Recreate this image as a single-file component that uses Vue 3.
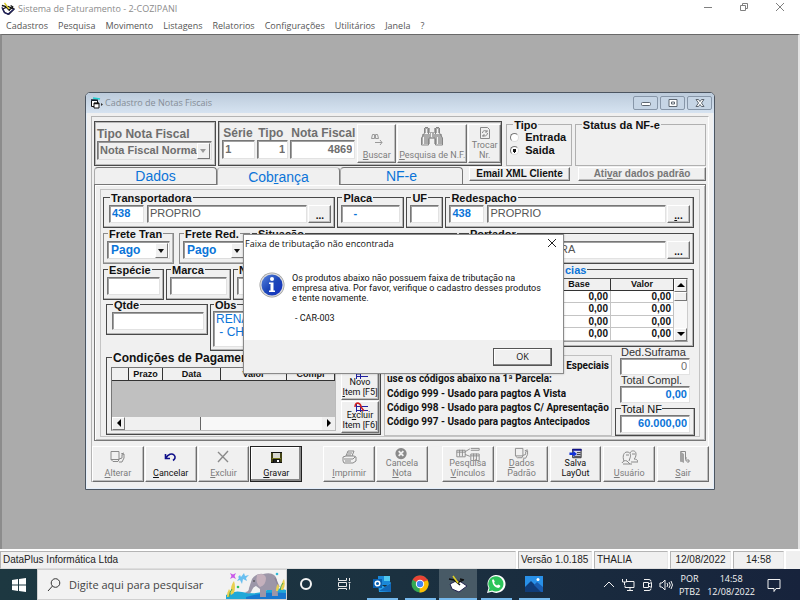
<script setup>
import { ref } from 'vue'

const menus = ['Cadastros', 'Pesquisa', 'Movimento', 'Listagens', 'Relatorios', 'Configurações', 'Utilitários', 'Janela', '?']
const tipo = ref('saida')
const serie = ref('1')
const tipoNum = ref('1')
const nota = ref('4869')
const obs = ref('RENA\n - CHA')

const G = '#8a8a8a'
const icons = {
  alterar: [
    { d: 'M2 1.500h8v8h-8zM2 9.500l2 2h5l1-2M10 9l3-1v-3l2-1v4l-2 4h-3M12 4l3-1', s: G },
  ],
  cancelar: [
    { d: 'M3.500 4v4.500h4.500M4 8c2-4 6-5 8-3c2 2 1 4-1 5.500', s: '#10108a', w: 1.6 },
  ],
  x: [{ d: 'M3 2l10 10M13 1l-10 11', s: G, w: 1.4 }],
  gravar: [
    { d: 'M3 2h11v11h-11z', f: '#111' },
    { d: 'M5 3h7v5h-7z', f: '#d8d8d0' },
    { d: 'M4 3v9M13 3v9M4 8.500h9', s: '#77771c', w: 1 },
    { d: 'M6 10h6v3h-6z', f: '#222' },
    { d: 'M9 10h2v2h-2z', f: '#fff' },
  ],
  imprimir: [
    { d: 'M5 6l2-5h6l-2 5M2 7l3-1h8l2 1v4l-3 2h-9l-1-2zM3 9h9l2-2M4 11h6M7 3h4M6 5h4', s: G },
  ],
  cancelaNota: [
    { d: 'M8 1a6 6 0 1 0 .01 0z', f: G },
    { d: 'M5.500 4.500l5 5M10.500 4.500l-5 5', s: '#f0f0f0', w: 2 },
  ],
  salva: [
    { d: 'M5.500 2.500h9v9h-9z', s: '#222', f: '#dde' },
    { d: 'M5 2h10v2h-10z', f: '#10108a' },
    { d: 'M10 6h4M10 8h4M7 10h7', s: '#333' },
    { d: 'M2 6h4v-2l4 3.500l-4 3v-2h-4z', f: '#1030d8' },
  ],
  vinculos: [
    { d: 'M1 3.500h9v7h-9zM1 5.500h9M4 3v7M7 3v7M10 5l5-3M10 8l5 2M16 1.500h9v2h-9M16 7.500h9v7h-9zM16 9.500h9M19 7v7M22 7v7', s: G },
  ],
  usuario: [
    { d: 'M3 11c-2-5 0-9 3-9c4 0 4 4 3 6l-1 3M5 5h3M1 13c1-2 3-3 5-2l3 3M9 3c1-3 6-3 6 1c0 3-1 4-2 5c2 0 4 1 4 3h-7M11 4h3M2 14h9', s: G },
  ],
  sair: [
    { d: 'M5.500 1.500h5v8M5 11h3', s: G },
    { d: 'M5 1l4 3v9l-4-2z', f: '#a2a2a2' },
    { d: 'M11 7v4h3M12.500 9l2 2l-2 2', s: G },
  ],
}
const tools = [
  { lines: ['Alterar'], key: 'A', icon: 'alterar', off: true },
  { lines: ['Cancelar'], key: 'C', icon: 'cancelar' },
  { lines: ['Excluir'], key: 'E', icon: 'x', off: true },
  { lines: ['Gravar'], key: 'G', icon: 'gravar', focus: true },
  { lines: ['Imprimir'], key: 'I', icon: 'imprimir', off: true, gap: 'gap-wide' },
  { lines: ['Cancela', 'Nota'], key: 'N', icon: 'cancelaNota', off: true },
  { lines: ['Pesquisa', 'Vínculos'], key: 'V', icon: 'vinculos', off: true, gap: 'gap-mid' },
  { lines: ['Dados', 'Padrão'], key: 'D', icon: 'alterar', off: true, gap: 'gap-small' },
  { lines: ['Salva', 'LayOut'], key: '', icon: 'salva', gap: 'gap-small' },
  { lines: ['Usuário'], key: 'U', icon: 'usuario', off: true, gap: 'gap-small' },
  { lines: ['Sair'], key: 'S', icon: 'sair', off: true, gap: 'gap-small' },
]
const split = (line, key) => {
  const i = key ? line.indexOf(key) : -1
  return i < 0 ? [line, '', ''] : [line.slice(0, i), key, line.slice(i + 1)]
}
</script>

<template>
  <div class="screen">
    <header class="apptitle">
      <svg class="logo" viewBox="0 0 16 16" width="14" height="14"><path d="M2 8l6-3l7 3l-6 6l-5-2z" fill="#fff" stroke="#111" stroke-width="1.500" /><path d="M1 6l3 6l4 2l7-6" fill="none" stroke="#222260" stroke-width="1.500" /><path d="M1 4l4 1l5 5M9 9l5-3M11 4l3 2" stroke="#111" stroke-width="1.500" fill="none" /><path d="M4 1l5 7" stroke="#d8c820" stroke-width="1.500" /></svg>
      <h1>Sistema de Faturamento - 2-COZIPANI</h1>
      <div class="sysbtns">
        <button aria-label="Minimizar"><svg width="10" height="10"><path d="M1 5.500h8" /></svg></button>
        <button aria-label="Restaurar"><svg width="10" height="10"><path d="M1.500 3.500h5v5h-5zM3.500 3v-1.500h5v5h-2" /></svg></button>
        <button aria-label="Fechar"><svg width="10" height="10"><path d="M1 1l8 8M9 1l-8 8" /></svg></button>
      </div>
    </header>
    <nav class="menubar"><a v-for="m in menus" :key="m" href="#">{{ m }}</a></nav>

    <main class="mdi">
      <section class="win">
        <div class="wintitle">
          <svg width="14" height="12" viewBox="0 0 14 12"><path d="M1.500 3.500h6v6h-6z" fill="#fff" stroke="#111" /><path d="M1 3h7" stroke="#123" stroke-width="1.500" /><path d="M4 6h5v5h-5z" fill="#fff" stroke="#111" /><path d="M4 6.500h5" stroke="#111" stroke-width="1.500" /><path d="M3 1l7 1" stroke="#20d0d0" stroke-width="1.500" /><path d="M11 6l2 1.500l-2 1.500z" fill="#333" /></svg>
          <h2>Cadastro de Notas Fiscais</h2>
          <div class="winbtns">
            <button aria-label="Minimizar janela"><svg width="12" height="10"><rect x="1.500" y="4.500" width="9" height="3" rx="1" /></svg></button>
            <button aria-label="Maximizar janela"><svg width="12" height="10"><path d="M2 1.500h8v7h-8zM4.500 4h3v2h-3z" /></svg></button>
            <button aria-label="Fechar janela"><svg width="12" height="10"><path d="M2 1.500h2.500l1.500 2l1.500-2h2.500l-2.500 3.500l2.500 3.500h-2.500l-1.500-2l-1.500 2h-2.500l2.500-3.500z" /></svg></button>
          </div>
        </div>

        <div class="sheet">
          <div class="top">
            <div class="box kind">
              <label for="kind" class="lab dim">Tipo Nota Fiscal</label>
              <div class="combo dimcombo"><select id="kind" disabled><option>Nota Fiscal Normal</option></select><i></i></div>
            </div>
            <div class="box ident">
              <div class="f serie"><label for="serie" class="lab dim">Série</label><input id="serie" v-model="serie" class="in dim" /></div>
              <div class="f tnum"><label for="tnum" class="lab dim">Tipo</label><input id="tnum" v-model="tipoNum" class="in dim right" /></div>
              <div class="f nnum"><label for="nnum" class="lab dim">Nota Fiscal</label><input id="nnum" v-model="nota" class="in dim right" /></div>
              <button class="btn b1 off" disabled>
                <svg width="16" height="14"><path d="M2.500 6.500l1-4h2v2h1v-2h2l1 4h-3v-2h-1v2zM6 10.500h7M11 8l2 2.500l-2 2.500" fill="none" stroke="#999" /></svg>
                <span><u>B</u>uscar</span>
              </button>
              <button class="btn b2 off" disabled>
                <svg width="26" height="22"><path d="M6 2h5v5h-5zM15 2h5v5h-5zM3 8h8v10h-8zM15 8h8v10h-8zM11 6h4v7h-4z" fill="#ababab" /><path d="M5.500 2v5l-3 5v7h7v-6l2-2M20.500 2v5l3 5v7h-7v-6l-2-2M6 1.500h3M17 1.500h3M9.500 2v6M16.500 2v6" fill="none" stroke="#858585" /><path d="M4.500 11v7M18.500 11v7M7.500 3v5M18.500 3v5M12.500 7v4" stroke="#f4f4f4" /></svg>
                <span><u>P</u>esquisa de N.F.</span>
              </button>
              <button class="btn b3 off" disabled>
                <svg width="12" height="14"><path d="M1.500 1.500h7l2 2v9h-9zM3.500 7c0-3 4-3 4.500-1M6 6h2v-2M8.500 7c0 3-4 4-5 2M6 9h-2v2" fill="none" stroke="#8a8a8a" /></svg>
                <span>Trocar</span><span>Nr.</span>
              </button>
            </div>
            <fieldset class="etch radios">
              <legend>Tipo</legend>
              <label><input v-model="tipo" type="radio" name="tipo" value="entrada" />Entrada</label>
              <label><input v-model="tipo" type="radio" name="tipo" value="saida" />Saida</label>
            </fieldset>
            <fieldset class="etch status"><legend>Status da NF-e</legend></fieldset>
          </div>

          <div class="tabs">
            <button class="tab">Dados</button>
            <button class="tab active">Cob<u>r</u>ança</button>
            <button class="tab">NF-e</button>
            <button class="btn flat mail">Email XML Cliente</button>
            <button class="btn flat act" disabled><span>Ati<u>v</u>ar dados padrão</span></button>
          </div>

          <div class="page"><div class="inner">
            <div class="row">
              <fieldset class="grp transp"><legend>Transportadora</legend><input class="in blue code" value="438" aria-label="Código da transportadora" /><input class="in name grow" value="PROPRIO" aria-label="Transportadora" /><button class="btn dots">...</button></fieldset>
              <fieldset class="grp placa"><legend>Placa</legend><input class="in blue grow" value="   -" aria-label="Placa" /></fieldset>
              <fieldset class="grp uf"><legend>UF</legend><input class="in grow" aria-label="UF" /></fieldset>
              <fieldset class="grp redesp"><legend>Redespacho</legend><input class="in blue code" value="438" aria-label="Código do redespacho" /><input class="in name grow" value="PROPRIO" aria-label="Redespacho" /><button class="btn dots"><span><u>.</u>..</span></button></fieldset>
            </div>
            <div class="row">
              <fieldset class="grp frete soft"><legend>Frete Tran</legend><div class="combo"><select aria-label="Frete transportadora"><option>Pago</option></select><i></i></div></fieldset>
              <fieldset class="grp frete soft second"><legend>Frete Red.</legend><div class="combo"><select aria-label="Frete redespacho"><option>Pago</option></select><i></i></div></fieldset>
              <fieldset class="grp situ"><legend>Situação</legend></fieldset>
              <fieldset class="grp portador"><legend>Portador</legend><input class="in name grow" value="RA" aria-label="Portador" /><button class="btn dots">...</button></fieldset>
            </div>
            <div class="mid">
              <div class="midleft">
                <div class="row">
                  <fieldset class="grp esp"><legend>Espécie</legend><input class="in grow" aria-label="Espécie" /></fieldset>
                  <fieldset class="grp marca"><legend>Marca</legend><input class="in grow" aria-label="Marca" /></fieldset>
                  <fieldset class="grp numero"><legend>N</legend><input class="in grow" aria-label="N" /></fieldset>
                </div>
                <div class="row obsrow">
                  <fieldset class="grp qtde"><legend>Qtde</legend><input class="in grow" aria-label="Qtde" /></fieldset>
                  <fieldset class="grp obs"><legend>Obs</legend><textarea v-model="obs" class="in blue grow" aria-label="Obs"></textarea></fieldset>
                </div>
              </div>
              <fieldset class="grp cias">
                <legend>cias</legend>
                <div class="gridbox">
                  <table>
                    <thead><tr><th></th><th class="c">Base</th><th class="c">Valor</th></tr></thead>
                    <tbody><tr v-for="n in 4" :key="n"><td></td><td>0,00</td><td>0,00</td></tr></tbody>
                  </table>
                  <div class="vscroll"><button aria-label="Subir"><svg width="8" height="6"><path d="M0 5l4-4l4 4z" /></svg></button><div class="thumb"></div><button aria-label="Descer"><svg width="8" height="6"><path d="M0 1l4 4l4-4z" /></svg></button></div>
                </div>
              </fieldset>
            </div>
            <div class="row low">
              <fieldset class="grp cond">
                <legend>Condições de Pagamento</legend>
                <div class="paybox">
                  <table><thead><tr><th class="p0"></th><th class="p1">Prazo</th><th class="p2">Data</th><th class="p3">Valor</th><th>Compl</th></tr></thead></table>
                  <div class="blank"></div>
                  <div class="hscroll"><button aria-label="Esquerda"><svg width="6" height="8"><path d="M5 0l-4 4l4 4z" /></svg></button><div class="thumb"></div><button aria-label="Direita"><svg width="6" height="8"><path d="M1 0l4 4l-4 4z" /></svg></button></div>
                </div>
                <div class="items">
                  <button class="btn item"><svg width="18" height="12"><path d="M5.500 0v10M5 2.500h12M5 7.500h12M9.500 0v10M5 5h5" stroke="#2020a0" fill="none" /></svg><span>Novo</span><span><u>I</u>tem [F5]</span></button>
                  <button class="btn item"><svg width="18" height="12"><path d="M5.500 2v8M5 4.500h12M5 8.500h12M9.500 2v8" stroke="#2020a0" fill="none" /><path d="M4 5q0-4 3-4q3 1 3 4l3 4" stroke="#d02020" fill="none" stroke-width="1.500" /></svg><span>E<u>x</u>cluir</span><span>Item [F6]</span></button>
                </div>
              </fieldset>
              <div class="codes">
                <p class="endline">Especiais</p>
                <p class="lead">use os códigos abaixo na 1ª Parcela:</p>
                <p>Código 999 - Usado para pagtos A Vista</p>
                <p>Código 998 - Usado para pagtos C/ Apresentação</p>
                <p>Código 997 - Usado para pagtos Antecipados</p>
              </div>
              <div class="totals">
                <label for="ded">Ded.Suframa</label><input id="ded" class="in dim right thin" value="0" />
                <label for="tc">Total Compl.</label><input id="tc" class="in blue right" value="0,00" />
                <fieldset class="grp tot"><legend>Total NF</legend><input class="in blue right grow" value="60.000,00" aria-label="Total NF" /></fieldset>
              </div>
            </div>
          </div></div>

          <div class="toolbar">
            <button v-for="t in tools" :key="t.lines[0]" class="btn tool" :class="[t.gap, { off: t.off, focus: t.focus, two: t.lines.length > 1 }]" :disabled="t.off">
              <svg :width="t.icon === 'vinculos' ? 26 : 17" height="15" :viewBox="t.icon === 'vinculos' ? '0 0 26 15' : '0 0 17 15'">
                <path v-for="(p, i) in icons[t.icon]" :key="i" :d="p.d" :fill="p.f || 'none'" :stroke="p.s || 'none'" :stroke-width="p.w || 1" />
              </svg>
              <span v-for="l in t.lines" :key="l">{{ split(l, t.key)[0] }}<u>{{ split(l, t.key)[1] }}</u>{{ split(l, t.key)[2] }}</span>
            </button>
          </div>
        </div>

        <div class="dialog" role="dialog" aria-labelledby="dlg">
          <div class="dtitle"><h3 id="dlg">Faixa de tributação não encontrada</h3><button aria-label="Fechar aviso"><svg width="10" height="10"><path d="M1 1l8 8M9 1l-8 8" stroke="#222" fill="none" /></svg></button></div>
          <div class="dbody">
            <svg width="26" height="26" viewBox="0 0 26 26"><defs><linearGradient id="ib" x1="0" y1="0" x2="1" y2="1"><stop offset="0" stop-color="#5a86e0" /><stop offset=".5" stop-color="#1c46b8" /><stop offset="1" stop-color="#1530c0" /></linearGradient></defs><circle cx="13" cy="13" r="12.500" fill="#9a9a9a" /><circle cx="13" cy="13" r="11.800" fill="#dcdcdc" /><circle cx="13" cy="13" r="10.500" fill="url(#ib)" /><circle cx="13" cy="7" r="2" fill="#fff" /><path d="M10 10.500h4.500v8h1.500v1.500h-6v-1.500h1.500v-6.500h-1.500z" fill="#fff" /></svg>
            <div class="msg"><p>Os produtos abaixo não possuem faixa de tributação na<br />empresa ativa. Por favor, verifique o cadastro desses produtos<br />e tente novamente.</p><p class="code-line">- CAR-003</p></div>
          </div>
          <div class="dfoot"><button>OK</button></div>
        </div>
      </section>
    </main>

    <footer class="statusbar"><span class="s0">DataPlus Informática Ltda</span><span class="s1">Versão 1.0.185</span><span class="s2">THALIA</span><span class="s3">12/08/2022</span><span class="s4">14:58</span><span class="s5"></span></footer>

    <div class="taskbar">
      <button class="start" aria-label="Iniciar"><svg width="14" height="14"><path d="M0 2l6-1v5.500h-6zM7 1l7-1v6.500h-7zM0 7.500h6v5.500l-6-1zM7 7.500h7v6.500l-7-1z" fill="#fff" /></svg></button>
      <div class="search">
        <svg width="14" height="14"><circle cx="8.500" cy="5" r="4.300" /><path d="M5.500 8l-4.500 5" /></svg>
        <input aria-label="Pesquisar" placeholder="Digite aqui para pesquisar" />
        <svg class="eleph" width="60" height="28" viewBox="0 0 60 28">
          <path d="M0 24q8-5 16-3q14 3 22-1q12-5 22-1v10h-60z" fill="#20a8d8" /><path d="M20 26q20-6 40-4v6h-40z" fill="#1878d0" />
          <path d="M26 8q4-6 11-5q12-3 14 6l1 16h-6v-6h-6v7h-6v-8l-4-3q-3 1-4 4q-2 6-7 2q4 0 4-4z" fill="#9c96a8" /><path d="M31 4q7-3 9 3q0 7-6 9q-5-4-3-12z" fill="#c4b0bc" /><path d="M49 7l4 9" stroke="#8a8498" stroke-width="1.500" /><circle cx="28" cy="10" r=".8" fill="#333" />
          <path d="M4 2l3 1.500l3-1.500l-1.500 3l1.500 3l-3-1.500l-3 1.500l1.500-3z" fill="#c858e8" /><path d="M12 6l2-2l1 2l3-4l1 3l4-1l-3 3l1 3l-4-2l-1 5l-2-4l-3 1l2-3z" fill="#68bff0" />
          <path d="M1 26q0-5 2-8q3 4 0 8M5 24q-1-9 3-14q2 6 0 12M50 20q0-5 2-7q2 3 0 7M55 19q0-7 3-11q2 6-1 11" fill="#e8cf50" /><path d="M3 26q1-6 3-8M54 19q1-5 3-7" stroke="#48a850" fill="none" /><circle cx="12" cy="16" r="1.300" fill="#30c060" /><circle cx="51" cy="3" r="1.300" fill="#30b8d8" />
        </svg>
      </div>
      <button class="task" aria-label="Cortana"><svg width="14" height="14"><circle cx="7" cy="7" r="5" fill="none" stroke="#f4f4f4" stroke-width="2" /></svg></button>
      <button class="task" aria-label="Visão de tarefas"><svg width="14" height="14"><path d="M1.500 1v2.500h8v-2.500M1.500 5.500h8v4h-8zM1.500 13v-1.500h8v1.500M12.500 1v3M12.500 6.500v6M11.500 5.500h2" fill="none" stroke="#e8e8e8" /></svg></button>
      <button class="task run" aria-label="Outlook"><svg width="20" height="18"><path d="M6 1h12v9h-12z" fill="#1a88d8" /><path d="M12 1h6v5h-6z" fill="#50c8f0" /><path d="M6 8l7 4l6-5v9q0 1-1 1h-11z" fill="#28a0e8" /><path d="M7 16l12-8v8q0 1-1 1z" fill="#1268b8" /><path d="M1 4h9v9h-9z" fill="#0a60b0" /><circle cx="5.500" cy="8.500" r="2.300" fill="none" stroke="#fff" stroke-width="1.500" /></svg></button>
      <button class="task run" aria-label="Chrome"><svg width="18" height="18"><circle cx="9" cy="9" r="8.500" fill="#34a853" /><path d="M9 9L1.600 4.800A8.500 8.500 0 0 1 16.400 4.800z" fill="#ea4335" /><path d="M9 9L16.400 4.800A8.500 8.500 0 0 1 8.500 17.500z" fill="#fbbc05" /><path d="M9 5h8" stroke="#ea4335" stroke-width="1" /><circle cx="9" cy="9" r="4.200" fill="#fff" /><circle cx="9" cy="9" r="3.200" fill="#4285f4" /></svg></button>
      <button class="task run on" aria-label="Faturamento"><svg width="20" height="18" viewBox="0 0 20 18"><path d="M2 9l8-4l9 6l-8 6l-7-3z" fill="#fff" stroke="#222250" stroke-width="1" /><path d="M1 4l5 1l6 5M9 8l6-3M12 4l4 1" stroke="#111" stroke-width="1.500" fill="none" /><path d="M5 1l5 7" stroke="#e0d020" stroke-width="1.500" /></svg></button>
      <button class="task run" aria-label="WhatsApp"><svg width="20" height="20"><path d="M1 19l1.500-5A9 9 0 1 1 6 17.700z" fill="#fff" /><path d="M2.500 17.500l1-3.500A7.600 7.600 0 1 1 6.200 16.500z" fill="#2cc45a" /><path d="M6 6.500q1-2 2-.500l.7 1.500q0 .7-.7 1.200q1 2 3 2.900l1.200-1.100l2 1q.5 2-2 2.400q-5-.5-6.200-7.400z" fill="#fff" /></svg></button>
      <button class="task run" aria-label="Fotos"><svg width="18" height="18"><path d="M0 1h18v16h-18z" fill="#2890e8" /><path d="M0 12l6-6l11 11h-17z" fill="#103c78" /><path d="M9 10l3-3l6 5v5h-2z" fill="#185cb0" /><circle cx="13" cy="4.500" r="1.500" fill="#fff" /></svg></button>
      <div class="tray">
        <svg width="12" height="14"><path d="M1 9l5-5l5 5" /></svg>
        <svg width="14" height="14"><path d="M5 3.500h8v6h-9v-2M6 12.500h6M9 10v2M1.500 1v3h4v-3M3.500 4v3" /></svg>
        <svg width="12" height="14"><path d="M2.500 4.500h5v5h-5zM7.500 6l3-1.500v5l-3-1.500M3 1.500h5q2 0 2 2M3 12.500h5q2 0 2-2" /></svg>
        <svg width="14" height="14"><path d="M1 5h2l3-3v10l-3-3h-2zM8 5q1.500 2 0 4M10 4q2.500 3 0 6M12 3q3 4 0 8" /></svg>
        <div class="lang"><span>POR</span><span>PTB2</span></div>
        <div class="clock"><span>14:58</span><span>12/08/2022</span></div>
        <svg class="note" width="14" height="14"><path d="M1 1.500h12v9h-4l-2 3v-3h-6z" /></svg>
      </div>
    </div>
  </div>
</template>

<style>
body { margin: 0; }
</style>

<style scoped>
* { box-sizing: border-box; }
.screen { min-height: 100vh; display: flex; flex-direction: column; background: #fff; font: 11px/12px "Liberation Sans", Arial, sans-serif; color: #111; overflow: hidden; }
h1, h2, h3, p { margin: 0; font-weight: inherit; }
button { font: inherit; color: inherit; padding: 0; margin: 0; border: 0; background: none; }
u { text-decoration: underline; text-underline-offset: 1px; }
.apptitle { display: flex; align-items: center; height: 18px; padding: 0 2px 0 1px; color: #8c8c8c; font: 9px/18px "Open Sans", "Noto Sans", sans-serif; }
.apptitle h1 { font-size: 9px; margin-left: 3px; flex: 1; }
.sysbtns { display: flex; }
.sysbtns button { width: 36px; height: 18px; }
.sysbtns svg { fill: none; stroke: #808080; }
.menubar { display: flex; gap: 10px; height: 16px; padding-left: 6px; font: 9px/16px "Open Sans", "Noto Sans", sans-serif; }
.menubar a { color: #555; text-decoration: none; }
.mdi { flex: 1; display: grid; place-items: center; padding-bottom: 3px; background: #ababab; border-top: 1px solid #696969; border-left: 2px solid #8c8c8c; border-right: 2px solid #e4e4e4; }

.win { position: relative; width: min(630px, 100%); background: #f0f0f0; border: 1px solid #4c5560; border-radius: 5px 5px 0 0; box-shadow: inset 0 0 0 1px #e4eefa; padding-bottom: 7px; }
.wintitle { display: flex; align-items: center; height: 20px; padding: 0 2px 0 4px; background: linear-gradient(#bccbdb, #d6e3f1); border-radius: 4px 4px 0 0; }
.wintitle h2 { flex: 1; margin-left: 1px; font: 9px/20px "Open Sans", "Noto Sans", sans-serif; color: #858d96; }
.winbtns { display: flex; gap: 2px; }
.winbtns button { width: 25px; height: 14px; border: 1px solid #8796a8; border-radius: 2px; background: #c6d5e5; display: grid; place-items: center; }
.winbtns svg { fill: #fff; stroke: #5d6670; }
.sheet { margin: 3px 5px 0; padding: 4px 2px 0; border: 1px solid #b4b4b4; border-right-color: #fff; border-bottom: 0; }

.top { display: flex; height: 45px; gap: 2px; }
.box { border: 1px solid #4a4a4a; box-shadow: inset 0 0 0 1px #b8b8b8; }
.kind { width: 123px; padding: 6px 3px 0 2px; display: flex; flex-direction: column; }
.lab { font: bold 12px/13px "Liberation Sans", sans-serif; white-space: nowrap; }
.dim { color: #6e6e6e; }
.combo { position: relative; display: flex; flex: 1; border: 1px solid #777; border-right-color: #ddd; border-bottom-color: #ddd; box-shadow: inset 1px 1px 0 #999; background: #fff; height: 18px; min-width: 0; }
.combo select { appearance: none; border: 0; background: none; width: 100%; padding: 0 14px 0 3px; font: bold 12px/16px "Liberation Sans", sans-serif; color: #0b74d8; opacity: 1; outline: 0; }
.combo i { position: absolute; right: 1px; top: 1px; bottom: 0; width: 13px; background: #f0f0f0; border: 1px solid #fff; border-right-color: #777; border-bottom-color: #777; pointer-events: none; }
.combo i::after { content: ""; position: absolute; left: 2px; top: 5px; border: 4px solid transparent; border-width: 4px 3px 0; border-top-color: #111; }
.dimcombo { flex: none; background: #f0f0f0; height: 19px; }
.combo.dimcombo select { color: #6e6e6e; font-size: 11px; padding-left: 2px; }
.dimcombo i::after { border-top-color: #999; }
.ident { flex: 1; display: flex; padding: 2px 1px; gap: 2px; }
.f { display: flex; flex-direction: column; padding-top: 3px; }
.serie { width: 33px; margin-left: 2px; }
.tnum { width: 31px; }
.nnum { flex: 1; }
.f .lab { padding-left: 1px; }
.f .in { height: 19px; }
.in { width: 100%; min-width: 0; height: 18px; border: 1px solid #777; border-right-color: #e2e2e2; border-bottom-color: #e2e2e2; box-shadow: inset 1px 1px 0 #a0a0a0; background: #fff; padding: 0 2px 1px; font: bold 11px/14px "Liberation Sans", sans-serif; outline: 0; border-radius: 0; }
.right { text-align: right; }
.blue { color: #0b74d8; }
.name { font-weight: 400; color: #555; }
.grow { flex: 1; }
.btn { background: #f0f0f0; border: 1px solid #fff; border-right-color: #6e6e6e; border-bottom-color: #6e6e6e; box-shadow: inset -1px -1px 0 #bdbdbd; display: flex; flex-direction: column; align-items: center; justify-content: flex-end; font: 9px/10px Roboto, "Liberation Sans", sans-serif; white-space: nowrap; }
.off { color: #7c7c7c; }
.ident .btn { margin-right: -1px; padding-bottom: 2px; }
.b1 { width: 39px; } .b2 { width: 70px; } .b3 { width: 33px; }
.b1 svg { margin-bottom: 4px; } .b2 svg { margin-bottom: 2px; }

fieldset { margin: 0; min-width: 0; }
legend { padding: 0 1px; margin: 0; font: bold 11px/12px "Liberation Sans", sans-serif; white-space: nowrap; }
.etch { border: 1px solid #b0b0b0; padding: 0; }
.etch legend { margin-left: 6px; }
.radios { width: 66px; margin-left: 2px; height: 47px; margin-top: -2px; }
.radios label { display: flex; align-items: center; gap: 6px; height: 13px; padding-left: 3px; font: bold 11px/13px "Liberation Sans", sans-serif; }
.radios input { appearance: none; width: 9px; height: 9px; margin: 0; border: 1px solid #777; border-right-color: #ddd; border-bottom-color: #ddd; border-radius: 50%; background: #fff; }
.radios input:checked { background: radial-gradient(#111 0 2px, #fff 2px); }
.status { width: 132px; height: 47px; margin: -2px 0 0 1px; }

.tabs { display: flex; align-items: flex-start; height: 17px; margin-top: 1px; }
.tab { flex: 0 0 123px; height: 17px; border: 1px solid #777; border-left-color: #aaa; border-bottom: 0; border-radius: 4px 4px 0 0; color: #0b74d8; font: 14px/16px "Liberation Sans", sans-serif; background: #f0f0f0; }
.tab.active { height: 18px; padding-top: 1px; position: relative; border-top-color: #ccc; }
.flat { height: 14px; font: bold 10px/12px "Liberation Sans", sans-serif; justify-content: center; }
.mail { flex: 0 0 101px; margin-left: 6px; }
.act { flex: 1; margin-left: 8px; color: #777; }

.page { border: 1px solid #777; box-shadow: inset 1px 1px 0 #fff, inset -1px -1px 0 #bbb; padding: 4px 5px 3px; }
.inner { border: 1px solid #c4c4c4; padding: 2px 5px 0 2px; }
.row { display: flex; gap: 2px; height: 36px; }
.grp { border: 1px solid #484848; box-shadow: inset -1px -1px 0 #b4b4b4; padding: 1px 3px 3px; display: flex; gap: 3px; height: 36px; }
.grp legend { margin-left: 1px; }
.soft { border-color: #8a8a8a; }
.transp { flex: 232; padding-left: 5px; }
.placa { flex: 0 0 67px; } .uf { flex: 0 0 37px; } .redesp { flex: 251; }
.code { flex: 0 0 35px; width: 35px; }
.dots { flex: 0 0 23px; height: 18px; margin-left: -2px; font: bold 10px/12px "Liberation Sans", sans-serif; }
.frete { flex: 0 0 71px; } .second { margin-left: 3px; }
.situ { flex: 0 0 205px; }
.portador { flex: 1; }
.portador legend { margin-left: 6px; }
.portador .name { text-indent: 94px; }
.mid { display: flex; height: 88px; gap: 8px; }
.midleft { flex: 0 0 260px; }
.esp { flex: 0 0 61px; } .marca { flex: 0 0 65px; } .numero { flex: 1; }
.obsrow { height: 52px; margin: -1px 0 0 3px; }
.qtde { flex: 0 0 102px; padding-left: 5px; }
.obs { flex: 1; height: 52px; padding: 0 3px 3px 2px; }
.obs textarea { height: 36px; resize: none; font: 12px/13px "Liberation Sans", sans-serif; overflow: hidden; white-space: pre; padding-top: 1px; }
.cias { flex: 1; height: 83px; padding: 2px 5px 4px; }
.cias legend { color: #0b74d8; margin-left: 187px; }
.gridbox { display: flex; flex: 1; border: 1px solid #555; border-right-color: #ccc; border-bottom-color: #999; background: #fff; }
table { border-collapse: separate; border-spacing: 0; table-layout: fixed; width: 100%; }
th, td { padding: 0 2px 0 0; font: bold 10px/11px "Liberation Sans", sans-serif; border-right: 1px solid #c4c4c4; border-bottom: 1px solid #c4c4c4; text-align: right; white-space: nowrap; }
td { height: 12px; }
th { height: 12px; text-align: center; font-size: 9px; line-height: 10px; background: #f0f0f0; border-right-color: #333; border-bottom-color: #333; padding: 0; }
th.c { width: 63px; }
.vscroll { flex: 0 0 13px; display: flex; flex-direction: column; background: #f8f8f8; }
.vscroll button, .hscroll button { background: #f0f0f0; display: grid; place-items: center; border: 1px solid #fff; border-right-color: #777; border-bottom-color: #777; flex: 0 0 13px; }
.vscroll .thumb { flex: 0 0 9px; background: #f0f0f0; border: 1px solid #fff; border-right-color: #777; border-bottom-color: #777; }
.vscroll button:last-child { margin-top: auto; }
.low { height: 84px; align-items: flex-start; margin-left: 3px; gap: 3px; }
.cond { flex: 1; height: 83px; padding: 3px 1px 3px 4px; gap: 5px; }
.cond legend { margin-left: 1px; font-size: 12px; }
.paybox { flex: 1; min-width: 0; display: flex; flex-direction: column; border: 1px solid #777; border-right-color: #bbb; border-bottom-color: #bbb; }
.paybox th { font-size: 9px; height: 13px; }
.p0 { width: 17px; } .p1 { width: 34px; } .p2 { width: 58px; } .p3 { width: 66px; }
.blank { flex: 1; background: #c0c0c0; }
.hscroll { display: flex; height: 13px; background: #f8f8f8; }
.hscroll .thumb { flex: 0 0 76px; background: #f0f0f0; border-right: 1px solid #666; }
.hscroll button:last-child { margin-left: auto; border-color: transparent; }
.items { flex: 0 0 38px; display: flex; flex-direction: column; gap: 1px; padding-top: 1px; }
.item { flex: 1; padding-bottom: 2px; }
.item svg { margin-bottom: -4px; }
.codes { flex: 0 0 228px; height: 81px; margin-top: 3px; border: 1px solid #c0c0c0; padding: 3px 2px 0; font: bold 10px/14px Roboto, "Liberation Sans", sans-serif; white-space: nowrap; }
.codes .endline { text-align: right; line-height: 13px; }
.codes .lead { line-height: 13px; margin-bottom: 2px; }
.totals { flex: 0 0 80px; display: flex; flex-direction: column; margin: -5px -1px 0 0; }
.totals label { font: 11px/11px "Liberation Sans", sans-serif; color: #333; padding-left: 6px; }
.totals > .in { width: 70px; margin-left: 5px; height: 17px; }
.tot { height: 33px; padding: 0 4px 3px; }
.tot legend { font-weight: 400; padding: 0; }
.thin { font-weight: 400; }

.toolbar { display: flex; gap: 1px; padding-top: 5px; margin: 0 -3px 0 -2px; }
.tool { flex: 1 1 51px; height: 36px; padding-bottom: 3px; }
.tool svg { margin-bottom: 3px; }
.tool.two svg { margin-bottom: -3px; }
.focus { border: 1px solid #222; box-shadow: inset -2px -2px 0 #888, inset 1px 1px 0 #fff; }
.gap-wide { margin-left: 20px; } .gap-mid { margin-left: 13px; } .gap-small { margin-left: 1px; }

.dialog { position: absolute; left: 157px; top: 141px; width: 321px; background: #fff; border: 1px solid #8a8a8a; box-shadow: 0 0 2px rgba(0, 0, 0, .25); font: 9px/10px "Open Sans", "Noto Sans", sans-serif; color: #111; }
.dtitle { display: flex; align-items: center; height: 18px; padding: 0 6px 0 1px; }
.dtitle h3 { flex: 1; font-size: 9px; }
.dbody { display: flex; gap: 7px; height: 87px; padding: 19px 15px 0; }
.dbody > svg { flex: none; }
.msg { white-space: nowrap; padding-top: 1px; font-family: Roboto, "Open Sans", sans-serif; }
.msg .code-line { margin: 10px 0 0 3px; }
.dfoot { display: flex; justify-content: flex-end; background: #f0f0f0; padding: 8px 11px 7px; }
.dfoot button { width: 59px; height: 18px; background: #f0f0f0; border: 1px solid #555; box-shadow: inset -1px -1px 0 #888, inset 1px 1px 0 #fff; }

.statusbar { display: flex; gap: 2px; height: 20px; padding-top: 2px; background: #fff; font: 10px/16px "Liberation Sans", sans-serif; color: #222; }
.statusbar span { border: 1px solid #b4b4b4; border-right-color: #e8e8e8; border-bottom-color: #ddd; background: #f0f0f0; padding: 0 2px; white-space: nowrap; }
.statusbar .s0 { flex: 1; } .statusbar .s1 { flex: 0 0 74px; } .statusbar .s2 { flex: 0 0 74px; } .s3, .s4 { text-align: center; } .statusbar .s3 { flex: 0 0 61px; } .statusbar .s4 { flex: 0 0 51px; } .statusbar .s5 { flex: 0 0 14px; border-color: #f0f0f0; }
.taskbar { display: flex; height: 31px; background: linear-gradient(90deg, #1d3841, #1b3140 50%, #17233c); color: #f4f4f4; }
.start { flex: 0 0 37px; display: grid; place-items: center; }
.search { flex: 0 1 250px; display: flex; align-items: center; background: #f2f2f2; border: 1px solid #d0d0d0; padding-left: 9px; min-width: 0; }
.search svg { flex: none; fill: none; stroke: #333; }
.search .eleph { stroke: none; }
.search input { flex: 1; min-width: 0; border: 0; background: none; outline: 0; padding: 0 0 0 8px; font: 11px/16px "Open Sans", "Noto Sans", sans-serif; }
.search input::placeholder { color: #444; opacity: 1; }
.task { flex: 0 0 38px; display: grid; place-items: center; border-bottom: 2px solid transparent; }
.run { background: linear-gradient(#76b9ed, #76b9ed) center bottom / 31px 2px no-repeat border-box; }
.on { background: linear-gradient(#76b9ed, #76b9ed) center bottom / 38px 2px no-repeat border-box, #485a66; }
.tray { margin-left: auto; display: flex; align-items: center; gap: 6px; padding-right: 19px; font: 9px/13px "Open Sans", "Noto Sans", sans-serif; }
.tray svg { fill: none; stroke: #f0f0f0; }
.lang, .clock { display: flex; flex-direction: column; align-items: center; }
.clock { margin-left: 1px; }
.note { margin-left: 6px; }
</style>
